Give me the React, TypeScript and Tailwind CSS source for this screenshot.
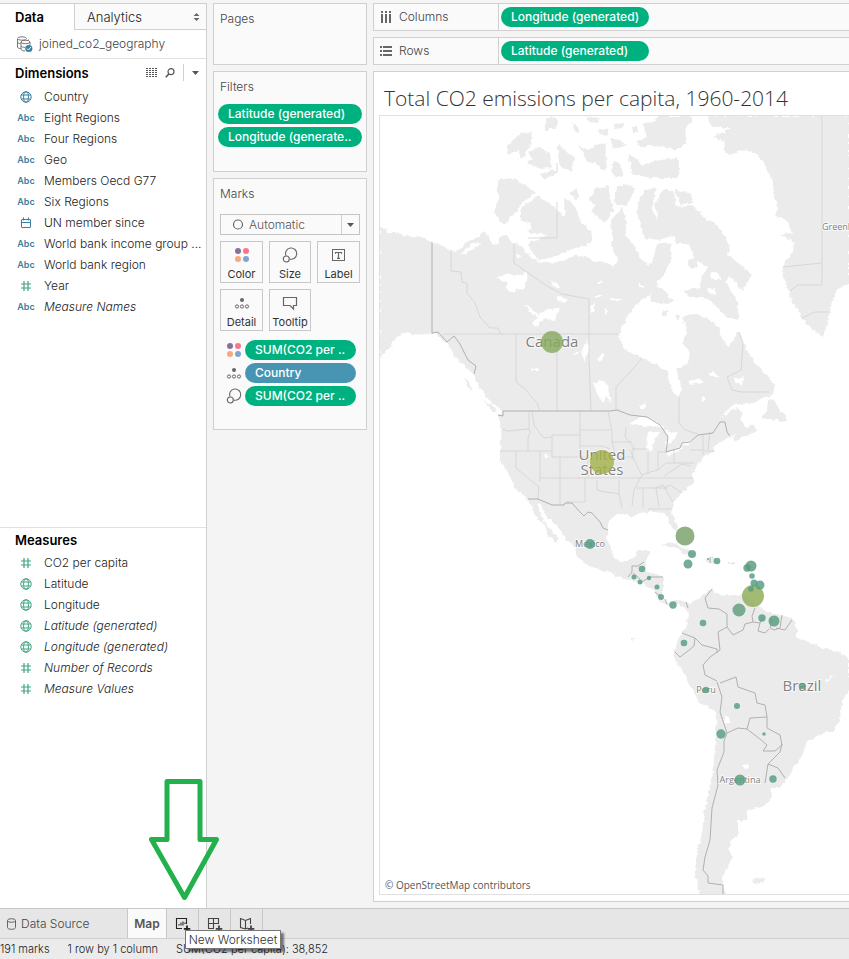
import React from "react";

type FieldKind = "globe" | "abc" | "date" | "number";
type Field = { kind: FieldKind; name: string; italic?: boolean };

const dimensions: Field[] = [
  { kind: "globe", name: "Country" },
  { kind: "abc", name: "Eight Regions" },
  { kind: "abc", name: "Four Regions" },
  { kind: "abc", name: "Geo" },
  { kind: "abc", name: "Members Oecd G77" },
  { kind: "abc", name: "Six Regions" },
  { kind: "date", name: "UN member since" },
  { kind: "abc", name: "World bank income group ..." },
  { kind: "abc", name: "World bank region" },
  { kind: "number", name: "Year" },
  { kind: "abc", name: "Measure Names", italic: true },
];

const measures: Field[] = [
  { kind: "number", name: "CO2 per capita" },
  { kind: "globe", name: "Latitude" },
  { kind: "globe", name: "Longitude" },
  { kind: "globe", name: "Latitude (generated)", italic: true },
  { kind: "globe", name: "Longitude (generated)", italic: true },
  { kind: "number", name: "Number of Records", italic: true },
  { kind: "number", name: "Measure Values", italic: true },
];

function GlobeIcon() {
  return (
    <svg width="12" height="12" viewBox="0 0 12 12" fill="none" stroke="currentColor">
      <circle cx="6" cy="6" r="5.2" />
      <ellipse cx="6" cy="6" rx="2.4" ry="5.2" />
      <path d="M1.3 4h9.4M1.3 8h9.4" />
    </svg>
  );
}

function FieldIcon({ kind }: { kind: FieldKind }) {
  if (kind === "globe") return <GlobeIcon />;
  if (kind === "abc") return <span className="text-[9px] font-semibold">Abc</span>;
  if (kind === "date")
    return (
      <svg width="12" height="12" viewBox="0 0 12 12" fill="none" stroke="currentColor">
        <rect x="1.5" y="2.5" width="9" height="8" rx="0.5" />
        <path d="M1.5 5.5h9M3.5 0.5v3M8.5 0.5v3" />
      </svg>
    );
  return (
    <svg width="12" height="12" viewBox="0 0 12 12" fill="none" stroke="currentColor" strokeWidth="1.2">
      <path d="M4 1v10M8 1v10M1 4h10M1 8h10" />
    </svg>
  );
}

function FieldList({ fields, green }: { fields: Field[]; green?: boolean }) {
  return (
    <ul>
      {fields.map((f) => (
        <li key={f.name} className="flex h-[21px] items-center">
          <span
            className={
              "ml-4 flex w-5 shrink-0 justify-center " +
              (green || f.kind === "number" ? "text-[#3fa583]" : "text-[#3a7f9d]")
            }
          >
            <FieldIcon kind={f.kind} />
          </span>
          <span className={"ml-2 truncate " + (f.italic ? "italic" : "")}>{f.name}</span>
        </li>
      ))}
    </ul>
  );
}

function Pill({ children, className }: { children: React.ReactNode; className: string }) {
  return (
    <button
      className={
        "flex h-5 items-center overflow-hidden rounded-full text-left font-medium whitespace-nowrap text-white " + className
      }
    >
      {children}
    </button>
  );
}

function ColorIcon() {
  return (
    <svg width="16" height="16" viewBox="0 0 16 16">
      <circle cx="4" cy="4" r="3" fill="#8a6f9e" />
      <circle cx="12" cy="4" r="3" fill="#f9768a" />
      <circle cx="4" cy="12" r="3" fill="#f5a97c" />
      <circle cx="12" cy="12" r="3" fill="#81a5cf" />
    </svg>
  );
}

function SizeIcon() {
  return (
    <svg width="16" height="16" viewBox="0 0 16 16" fill="none" stroke="#666" strokeWidth="1.1">
      <path d="M3.900 8.600A5.600 5.600 0 1 1 7.600 12" />
      <circle cx="4.300" cy="12" r="3" />
    </svg>
  );
}

function LabelIcon() {
  return (
    <svg width="16" height="16" viewBox="0 0 16 16" fill="none" stroke="#666">
      <rect x="1.5" y="2.5" width="12" height="11" />
      <path d="M4.5 6.8V5.5h6v1.3M7.5 5.5v6M6 11.3h3" strokeWidth="1.2" />
    </svg>
  );
}

function DetailIcon() {
  return (
    <svg width="16" height="16" viewBox="0 0 16 16" fill="none" stroke="#666">
      <circle cx="8" cy="5" r="2" fill="#666" stroke="none" />
      <circle cx="3" cy="11.5" r="1.6" />
      <circle cx="8" cy="11.5" r="1.6" />
      <circle cx="13" cy="11.5" r="1.6" />
    </svg>
  );
}

function TooltipIcon() {
  return (
    <svg width="16" height="16" viewBox="0 0 16 16" fill="none" stroke="#666" strokeWidth="1.2">
      <path d="M1.5 2.5h13v8h-3v3.500l-3.500-3.500h-6.500z" />
    </svg>
  );
}

const marks = [
  { label: "Color", icon: <ColorIcon /> },
  { label: "Size", icon: <SizeIcon /> },
  { label: "Label", icon: <LabelIcon /> },
  { label: "Detail", icon: <DetailIcon /> },
  { label: "Tooltip", icon: <TooltipIcon /> },
];

const card = "border border-[#d0d0d0] bg-[#fafafa]";

const land = [
  // North America, clockwise from the Beaufort Sea
  "380,227 387,228 385,233 398,233 405,236 412,237 425,238 432,242 442,245 451,251 457,252 465,243 478,237 483,231 488,237 492,243 495,245 500,243 498,237 505,235 512,242 522,247 527,252 532,258 542,263 562,262 575,255 588,257 595,262 608,263 613,267 618,259 612,250 612,238 611,220 622,208 627,222 626,236 633,243 638,253 647,265 652,263 655,252 657,243 670,243 672,257 665,273 657,282 650,295 637,303 627,317 618,337 625,350 642,358 657,365 668,372 668,377 672,390 678,397 682,390 678,377 677,370 680,367 688,363 690,353 682,343 687,333 683,317 693,313 710,320 720,328 722,338 727,347 733,342 738,330 743,340 748,352 753,360 768,377 775,385 773,395 750,403 733,405 720,417 737,408 743,412 740,420 747,428 753,425 758,430 743,437 735,442 733,438 738,433 730,437 715,445 713,452 703,457 697,467 693,473 693,483 682,493 673,503 672,513 678,528 677,533 670,525 665,513 653,512 640,513 633,517 620,513 610,520 608,523 607,537 615,560 623,562 635,557 638,550 650,550 647,562 645,570 663,577 663,590 660,597 668,603 680,600 690,605 687,609 678,604 673,607 660,601 653,590 643,583 630,580 610,573 605,572 588,565 575,555 575,547 565,538 557,525 548,518 540,503 537,505 542,517 548,527 558,538 558,543 548,537 545,525 535,517 533,508 528,500 515,488 508,473 500,460 500,450 502,430 498,415 503,412 492,403 480,388 472,373 455,357 447,343 435,333 422,335 402,333 395,340 385,353 380,358",
  // Arctic islands
  "498,180 512,178 525,185 535,193 522,203 515,213 503,225 494,213 498,200",
  "522,207 538,196 555,207 565,217 564,197 575,207 580,220 592,233 592,243 575,248 555,257 538,260 532,253 528,243 542,238 547,235 528,232 532,225 520,220",
  "570,192 576,189 579,194 575,200",
  "588,200 595,188 608,186 613,210 605,222 592,213 595,205",
  "522,133 532,132 530,147 522,160 518,150 507,155 508,145",
  "528,153 538,147 550,153 552,167 542,169 527,163 533,158",
  "558,143 565,150 575,158 572,172 560,167 558,155",
  "540,175 552,170 558,172 545,180",
  "578,145 588,150 594,145 605,143 607,160 605,172 595,163 588,162 583,152",
  "545,122 550,117 558,118 557,128 545,130",
  "573,122 577,126 580,134 575,131",
  "585,117 600,118 598,123 588,122",
  "600,128 609,130 606,136 598,133",
  "628,153 636,158 642,165 660,160 677,158 680,172 677,178 653,178 632,175",
  "643,123 655,122 658,116 693,116 685,130 687,142 675,150 655,145 640,147 636,142 647,137",
  "610,138 620,140 626,146 613,149",
  "613,161 620,163 623,175 615,177 611,170",
  "613,124 624,123 623,128 614,129",
  "632,126 637,126 638,132 633,132",
  "617,187 623,184 635,187 630,200 623,207 614,202",
  "645,190 657,188 653,200 652,210 658,220 655,203 663,190 673,190 677,207 692,205 703,217 717,225 727,240 730,250 728,255 743,267 752,275 743,290 730,277 725,282 737,300 739,320 727,317 713,303 703,297 687,297 685,290 700,288 702,275 707,268 693,257 690,245 677,243 673,235 660,240 645,238 640,225 637,210 640,197",
  "675,190 690,192 693,202 680,205",
  "690,258 697,259 698,267 691,269 688,264",
  "653,283 660,287 675,302 668,304 660,303 650,303",
  "662,312 669,310 667,316 662,316",
  "677,314 680,316 679,320 676,319",
  // Greenland
  "707,116 713,128 732,128 713,137 725,143 723,150 730,155 745,150 755,153 762,160 768,172 773,180 773,193 777,207 775,217 787,220 792,233 780,234 794,242 793,253 785,260 783,273 790,297 802,317 810,328 823,336 828,323 830,310 837,290 849,283 849,116",
  // Newfoundland and the Caribbean
  "770,398 775,400 777,408 785,413 787,423 777,420 762,418 767,407",
  "660,545 673,543 688,550 697,557 685,555 678,548 666,546",
  "705,560 713,557 720,562 710,564",
  "729,562 736,562 736,564 729,564",
  // Vancouver Island and the Pacific coast
  "464,378 468,381 472,391 467,386",
  "483,400 492,405 499,412 493,411",
  // South America
  "688,605 697,600 707,592 712,589 716,594 727,595 743,595 753,600 763,610 780,615 792,618 797,630 797,638 810,642 823,648 840,652 849,658 849,690 842,700 840,720 834,731 823,733 807,742 803,753 793,770 785,782 780,787 770,787 772,797 763,807 748,810 747,820 738,820 738,833 728,848 733,857 725,870 722,883 726,895 700,895 695,873 697,853 702,833 705,807 712,780 715,747 717,713 700,702 690,687 683,670 673,657 675,647 682,632 687,627 688,610",
  "753,880 760,877 766,879 760,883 755,884",
  "631,637 634,638 633,641 631,640",
];

const lakes = [
  "497,278 508,273 515,276 527,273 525,287 512,292 505,288 508,283",
  "523,305 530,308 538,315 548,309 560,308 555,320 545,319 535,327 532,322 538,318",
  "593,382 597,385 599,380 605,382 612,402 606,397 603,403 597,393",
  "630,423 640,417 648,417 657,422 665,428 657,427 647,427",
  "650,430 655,432 660,432 654,440 652,452 646,447 647,437",
  "665,430 678,432 672,442 665,447 668,438",
  "666,454 674,450 682,447 680,450 668,456",
  "682,443 693,440 691,443 683,445",
  "544,454 548,455 549,458 546,458",
  "583,346 588,341 589,350 585,362 582,356",
  "597,359 603,353 605,356 600,361",
  "591,307 595,302 594,311 590,313",
  "604,310 607,307 608,313 605,315",
  "550,280 556,283 560,288 553,286",
  "557,297 568,299 566,302 559,301",
  "596,282 602,280 601,284 597,284",
  "595,296 602,295 603,298 597,298",
  "532,369 538,368 537,371 532,371",
  "575,352 579,352 578,355 574,355",
  "462,253 467,248 476,242 482,243 474,249 464,254",
  "517,252 519,252 519,258 517,258",
  "640,405 645,402 646,407 641,409",
  "701,397 706,396 704,403 701,403",
  "708,374 715,372 719,376 712,377",
  "687,381 700,379 703,383 690,385",
  "711,272 720,275 721,279 712,280",
  "708,288 715,289 716,295 709,294",
  "610,298 622,299 618,301 611,301",
  "638,282 645,287 643,289 639,286",
  "723,330 728,329 727,335 724,334",
  "734,378 745,377 742,384 736,383",
  "826,680 833,676 835,675 828,682",
  "724,717 729,717 730,723 725,723",
  "742,765 748,764 749,768 745,769",
  "793,767 796,764 795,771 792,772",
];

const innerBorders =
  "M451,251V271L461,272 462,282 467,283 467,293 475,303 480,317 490,328 498,328 501,334M443,334H618M514,243V263L547,286 562,294 589,299V360L591,411M557,163V173M557,202V238H528M516,335V382L524,388 537,403 540,411M557,335V411M616,410V387L632,370 642,358M679,397V423L685,430 698,434M739,332L743,343 741,370 727,377 732,390 741,392H769" +
  "M502,429L508,431 528,429M529,411V429L530,433 528,438V451M500,451H552M516,451V468L539,487 538,499M540,451V482M540,478H693M532,411L534,425 541,435 545,438 552,437M552,435H580M552,435V457H588M560,457V505M580,411V457M588,457V478M580,430H610M580,446H602L610,449M585,478V502H566M597,480V490L605,492 615,493 619,494" +
  "M608,411L612,432V442H632M626,427L625,437 634,447 632,460M632,449H646M612,442L616,457H632M630,450L638,468 642,475 634,490 632,506M619,480V494L622,508M643,489V508M656,488L659,507M648,509H672M637,488H668M648,452V474M658,452V470M658,452H666M674,450V463H695M642,475L650,472 658,470 666,463 674,463M690,466L682,464 664,476M655,488L663,485 673,502M664,488L670,485 682,493M703,435V455M710,432L708,450M704,451H714M690,450H703" +
  "M821,116L822,120V285H798L790,291M783,267L822,263M802,318L815,312H828";

const countryBorders =
  "M432,242V333L438,332 447,342 454,336 460,344 468,360 476,366 474,374M498,415L503,416V411H610L617,410 630,415 647,417 660,425 668,437 666,452 680,448 682,443 690,442 698,435 713,433 720,422 725,422 727,432 730,436M528,499H538L552,505H564L565,503H572L580,512 584,516 588,512 592,513 600,522 603,528 608,530" +
  "M628,577L632,572V566H638L644,562M640,583L650,577H663M633,573L640,579M655,592L661,597M665,599L667,604M686,602L688,608M710,557V563" +
  "M712,589L705,598 708,608 719,609 727,614V627L733,635 743,630 745,624 753,622 752,616 755,608M753,622L760,623 763,617M760,623L758,631 765,633 769,629M772,619L770,628 774,630M782,615L780,628 774,630M792,620L785,630 776,628M727,627L718,632 720,650 710,657 703,665 705,675 717,681M682,633L695,638 702,645 717,649V653M695,638L694,646 688,651 680,657 675,652M717,682L722,697 720,712M720,683L736,677 738,687 755,693 757,703 765,705 767,717 750,718 747,729 738,728 727,733M720,712L727,733 724,741V752L717,770 718,785 712,808 710,840 705,857 703,870 708,876V883L723,885V895M747,729L760,739 767,745 763,751 775,751 782,745 780,735 767,728V717M782,744L780,752 768,764 765,783M768,764L778,768 785,778";

const bubbles: [number, number, number, string][] = [
  [552, 342, 11, "#86aa5e"],
  [602, 462, 12, "#a2b14b"],
  [685, 536, 9.5, "#77a068"],
  [590, 544, 5, "#4d9a80"],
  [692, 554, 4, "#559b83"],
  [688, 564, 4.5, "#559b83"],
  [708, 559, 1, "#559b83"],
  [717, 561, 3.3, "#559b83"],
  [753, 596, 11, "#8fab57"],
  [739, 610, 6.5, "#5f9c79"],
  [747, 568, 3.7, "#559b83"],
  [751, 566, 5.5, "#559b7c"],
  [752, 576, 2.8, "#559b83"],
  [754, 583, 3.5, "#559b83"],
  [760, 585, 4.5, "#559b83"],
  [751, 589, 2.8, "#559b83"],
  [762, 618, 3.7, "#559b83"],
  [774, 621, 5.5, "#559b7c"],
  [703, 623, 3.3, "#559b83"],
  [642, 569, 3.3, "#559b83"],
  [634, 577, 2.5, "#559b83"],
  [649, 578, 2.2, "#559b83"],
  [640, 582, 2.5, "#559b83"],
  [657, 587, 2.5, "#559b83"],
  [661, 597, 3, "#559b83"],
  [673, 605, 3.7, "#559b83"],
  [684, 643, 3.3, "#559b83"],
  [706, 690, 3.3, "#559b83"],
  [737, 706, 3, "#559b83"],
  [721, 734, 4.7, "#559b83"],
  [764, 734, 1.8, "#559b83"],
  [740, 780, 5.5, "#559b7c"],
  [773, 779, 3.7, "#559b83"],
  [802, 686, 3.3, "#559b83"],
];

const mapLabels: [string, number, number, string][] = [
  ["Canada", 552, 347, "text-[15px]"],
  ["United", 602, 460, "text-[15px]"],
  ["States", 602, 475, "text-[15px]"],
  ["Mexico", 590, 547, "text-[9px]"],
  ["Peru", 706, 693, "text-[9px]"],
  ["Argentina", 740, 783, "text-[9px]"],
  ["Brazil", 802, 691, "text-[15px]"],
  ["Greenland", 844, 230, "text-[9px]"],
];

function WorldMap() {
  return (
    <svg
      role="img"
      aria-label="Map of total CO2 emissions per capita"
      className="block h-full w-full"
      viewBox="380 116 469 779"
      preserveAspectRatio="xMinYMin slice"
    >
      <filter id="coast" x="0" y="0" width="100%" height="100%">
        <feTurbulence type="fractalNoise" baseFrequency="0.2" numOctaves="2" seed="4" />
        <feDisplacementMap in="SourceGraphic" scale="5" xChannelSelector="R" yChannelSelector="G" />
      </filter>
      <g filter="url(#coast)">
        {land.map((points, i) => (
          <polygon key={i} points={points} fill="#ebebeb" />
        ))}
        {lakes.map((points, i) => (
          <polygon key={i} points={points} fill="#fff" />
        ))}
      </g>
      <g fill="none" strokeLinejoin="round">
        <path d={innerBorders} stroke="#d2d2d2" strokeWidth="0.8" />
        <path d={countryBorders} stroke="#b0b0b0" />
      </g>
      <g
        className="font-['Open_Sans',sans-serif] font-medium"
        fill="#808080"
        stroke="#fff"
        strokeOpacity="0.7"
        strokeWidth="2"
        paintOrder="stroke"
        textAnchor="middle"
      >
        {mapLabels.map(([text, x, y, size]) => (
          <text key={text} x={x} y={y} className={size}>
            {text}
          </text>
        ))}
      </g>
      {bubbles.map(([x, y, r, color], i) => (
        <circle key={i} cx={x} cy={y} r={r} fill={color} fillOpacity="0.82" />
      ))}
    </svg>
  );
}

function NewSheetIcon({ kind }: { kind: "sheet" | "dashboard" | "story" }) {
  return (
    <svg width="17" height="16" viewBox="0 0 17 16" fill="none" stroke="currentColor" strokeWidth="1.1">
      {kind === "sheet" && <path d="M8 12.500H2.500V2.500h10V8M5 9.500V8M7 9.500V6.500M9 9.500V5.500M11 8V6.500" />}
      {kind === "dashboard" && <path d="M8 12.500H2.500V2.500h10V8M7.500 2.500v10M2.500 7.500h10" />}
      {kind === "story" && <path d="M7.500 13L2.500 11.500V2.500L7.500 4.500l5-2V8M7.500 4.500V13M10 12l-2.500 1" />}
      <path d="M13 9.500v6.500M9.800 12.800h6.500" strokeWidth="1.800" />
    </svg>
  );
}

export default function App() {
  return (
    <div className="flex min-h-screen flex-col overflow-hidden bg-[#f4f4f4] font-['Inter',sans-serif] text-[12px] leading-4 font-light text-[#222]">
      <div className="flex flex-1 pt-[3px]">
        <aside className="flex w-[207px] shrink-0 flex-col border-t border-r border-[#d0d0d0] bg-white">
          <div className="flex h-[26px]">
            <button className="w-[74px] pr-[15px] pl-[15px] text-left text-[13px] font-semibold text-black">Data</button>
            <button className="flex flex-1 items-center justify-between border-b border-l border-[#d0d0d0] bg-[#fafafa] pr-1.5 pl-3 text-[13px]">
              Analytics
              <svg width="7" height="8" viewBox="0 0 7 8" fill="#667">
                <path d="M3.500 0L6.500 3h-6zM3.500 8L6.500 5h-6z" />
              </svg>
            </button>
          </div>
          <div className="flex h-[29px] items-center gap-1.5 border-b border-[#e0e0e0] pl-4 text-[#444]">
            <svg width="17" height="17" viewBox="0 0 17 17" fill="none" stroke="#777">
              <path d="M5 12.500C2.500 12.500 1.500 12 1.500 11V3M12.500 3.500V3" />
              <ellipse cx="6" cy="2.500" rx="4.500" ry="1.700" />
              <path d="M5 6v7c0 1 1.500 2 4 2M14 6v3M1.500 6c0 1 1 1.500 3 1.500M5 10c1 1 2 1.300 4 1.300" />
              <ellipse cx="9.500" cy="6" rx="4.500" ry="1.700" />
              <circle cx="12.800" cy="12.500" r="3.600" fill="#3a7f9d" stroke="none" />
              <path d="M11 12.500l1.500 1.500 2.300-3" stroke="#fff" />
            </svg>
            joined_co2_geography
          </div>
          <div className="flex h-[27px] items-center pl-[15px]">
            <h2 className="flex-1 text-[13px] font-semibold text-black">Dimensions</h2>
            <button aria-label="View data" className="mr-[7px]">
              <svg width="12" height="9" viewBox="0 0 12 9" stroke="#555" strokeDasharray="2 1" fill="none">
                <path d="M0 .5h12M0 2.500h12M0 4.500h12M0 6.500h12M0 8.500h12" />
              </svg>
            </button>
            <button aria-label="Find field" className="mr-2">
              <svg width="10" height="10" viewBox="0 0 10 10" fill="none" stroke="#555" strokeWidth="1.200">
                <circle cx="6" cy="3.700" r="3" />
                <path d="M3.800 6L.8 9.200" strokeWidth="1.600" />
              </svg>
            </button>
            <button aria-label="Dimension options" className="flex h-[17px] items-center border-l border-[#d0d0d0] pr-[7px] pl-2">
              <svg width="7" height="4" viewBox="0 0 7 4" fill="#555">
                <path d="M0 0h7L3.500 4z" />
              </svg>
            </button>
          </div>
          <div className="h-[441px]">
            <FieldList fields={dimensions} />
          </div>
          <h2 className="flex h-[25px] items-center border-t border-[#e0e0e0] pl-[15px] text-[13px] font-semibold text-black">
            Measures
          </h2>
          <FieldList fields={measures} green />
        </aside>

        <div className="ml-1.5 flex w-[154px] shrink-0 flex-col gap-1.5 text-[#444]">
          <section className={card + " h-[62px] px-1.5 pt-[7px]"}>
            <h3>Pages</h3>
          </section>
          <section className={card + " h-[101px] px-1 pt-[7px]"}>
            <h3 className="px-0.5">Filters</h3>
            <div className="mt-[9px] flex flex-col gap-[3px]">
              <Pill className="bg-[#00b180] px-2.5">Latitude (generated)</Pill>
              <Pill className="bg-[#00b180] px-2.5">Longitude (generate..</Pill>
            </div>
          </section>
          <section className={card + " h-[252px] px-1.5 pt-[7px]"}>
            <h3>Marks</h3>
            <div className="relative mt-3 h-[21px] w-[140px]">
              <select
                aria-label="Mark type"
                className="h-full w-full appearance-none border border-[#c4c4c4] bg-[#fafafa] pl-7 text-[12px] text-[#555]"
              >
                <option>Automatic</option>
              </select>
              <svg className="pointer-events-none absolute inset-0" width="140" height="21" viewBox="0 0 140 21">
                <circle cx="18" cy="10.500" r="4.500" fill="none" stroke="#666" strokeWidth="1.200" />
                <path d="M121.500 1v19" stroke="#d0d0d0" />
                <path d="M127 9h7l-3.500 4z" fill="#555" />
              </svg>
            </div>
            <div className="mt-1.5 grid w-[140px] grid-cols-[43px_42px_43px] gap-1.5 text-[11px] font-normal text-[#333]">
              {marks.map((m) => (
                <button key={m.label} className="flex h-[42px] flex-col items-center justify-between border border-[#c8c8c8] pt-[5px]">
                  {m.icon}
                  {m.label}
                </button>
              ))}
            </div>
            <div className="mt-[9px] flex flex-col gap-[3px] pl-1.5">
              <div className="flex items-center gap-[3px]">
                <ColorIcon />
                <Pill className="w-[111px] bg-[#00b180] px-2.5">SUM(CO2 per ..</Pill>
              </div>
              <div className="flex items-center gap-[3px]">
                <DetailIcon />
                <Pill className="w-[111px] bg-[#4894b3] px-2.5">Country</Pill>
              </div>
              <div className="flex items-center gap-[3px]">
                <SizeIcon />
                <Pill className="w-[111px] bg-[#00b180] px-2.5">SUM(CO2 per ..</Pill>
              </div>
            </div>
          </section>
        </div>

        <main className="mb-1.5 ml-1.5 flex min-w-0 flex-1 flex-col gap-1.5">
          <div className="flex h-7 border border-r-0 border-[#d0d0d0] bg-[#fafafa]">
            <h3 className="flex w-[125px] items-center gap-[7px] border-r border-[#d0d0d0] pl-1.5 text-[#444]">
              <svg width="12" height="12" viewBox="0 0 12 12" fill="#666">
                <path d="M1 0h2v2H1zM5 0h2v2H5zM9 0h2v2H9zM1 3h2v9H1zM5 3h2v9H5zM9 3h2v9H9z" />
              </svg>
              Columns
            </h3>
            <div className="flex items-center pl-0.5">
              <Pill className="w-[148px] bg-[#00b180] px-2.5">Longitude (generated)</Pill>
            </div>
          </div>
          <div className="flex h-7 border border-r-0 border-[#d0d0d0] bg-[#fafafa]">
            <h3 className="flex w-[125px] items-center gap-[7px] border-r border-[#d0d0d0] pl-1.5 text-[#444]">
              <svg width="12" height="12" viewBox="0 0 12 12" fill="#666">
                <path d="M0 1h2v2H0zM0 5h2v2H0zM0 9h2v2H0zM3 1h9v2H3zM3 5h9v2H3zM3 9h9v2H3z" />
              </svg>
              Rows
            </h3>
            <div className="flex items-center pl-0.5">
              <Pill className="w-[148px] bg-[#00b180] px-2.5">Latitude (generated)</Pill>
            </div>
          </div>
          <section className="flex flex-1 flex-col border border-r-0 border-[#d0d0d0] bg-white pb-1.5 pl-[5px]">
            <h1 className="flex h-[43px] items-center pt-2 pl-[5px] font-['Open_Sans',sans-serif] text-[21px] font-light whitespace-nowrap text-[#333]">
              Total CO2 emissions per capita, 1960-2014
            </h1>
            <div className="relative flex-1 border border-r-0 border-[#e0e0e0]">
              <div className="absolute inset-0">
                <WorldMap />
              </div>
              <a
                href="#copyright"
                className="absolute bottom-px left-[5px] font-['Open_Sans',sans-serif] text-[10px] font-medium text-[#555]"
              >
                © OpenStreetMap contributors
              </a>
            </div>
          </section>
        </main>
      </div>

      <nav className="flex h-[30px] border-t border-[#c8c8c8] bg-[#e6e6e6] text-[#444]">
        <button className="flex w-32 items-center gap-[5px] border-r border-[#c8c8c8] pl-[7px]">
          <svg width="9" height="12" viewBox="0 0 9 12" fill="none" stroke="#666">
            <path d="M.5 2.500v7c0 1 1.500 1.800 4 1.800s4-.8 4-1.800v-7" />
            <ellipse cx="4.500" cy="2.500" rx="4" ry="1.800" />
          </svg>
          Data Source
        </button>
        <button className="w-[39px] border-r border-[#c8c8c8] bg-[#fafafa] text-[12px] font-semibold text-[#555]">Map</button>
        <div className="relative">
          <button aria-label="New Worksheet" className="flex h-full w-8 items-center justify-center border-r border-[#c8c8c8] text-[#222]">
            <NewSheetIcon kind="sheet" />
          </button>
          <svg
            className="pointer-events-none absolute bottom-full left-[-18px] mb-2"
            width="71"
            height="122"
            viewBox="0 0 71 122"
            fill="none"
            stroke="#22b14c"
            strokeWidth="5"
            strokeLinejoin="round"
          >
            <path d="M18 2.500H51V60.500H67.500L35.500 118.500L2.500 60.500H18z" />
          </svg>
          <div
            role="tooltip"
            className="absolute top-[21px] left-[18px] z-10 flex h-[19px] w-[96px] items-center justify-center border border-[#767676] bg-white text-[12px] whitespace-nowrap text-[#333] shadow-[3px_3px_2px_rgba(0,0,0,0.5)]"
          >
            New Worksheet
          </div>
        </div>
        <button aria-label="New Dashboard" className="flex w-8 items-center justify-center border-r border-[#c8c8c8]">
          <NewSheetIcon kind="dashboard" />
        </button>
        <button aria-label="New Story" className="flex w-8 items-center justify-center border-r border-[#c8c8c8]">
          <NewSheetIcon kind="story" />
        </button>
      </nav>
      <footer className="flex h-[21px] items-center gap-[18px] border-t border-[#d0d0d0] bg-[#ebebeb] text-[11px] whitespace-nowrap">
        <span>191 marks</span>
        <span>1 row by 1 column</span>
        <span>SUM(CO2 per capita): 38,852</span>
      </footer>
    </div>
  );
}
